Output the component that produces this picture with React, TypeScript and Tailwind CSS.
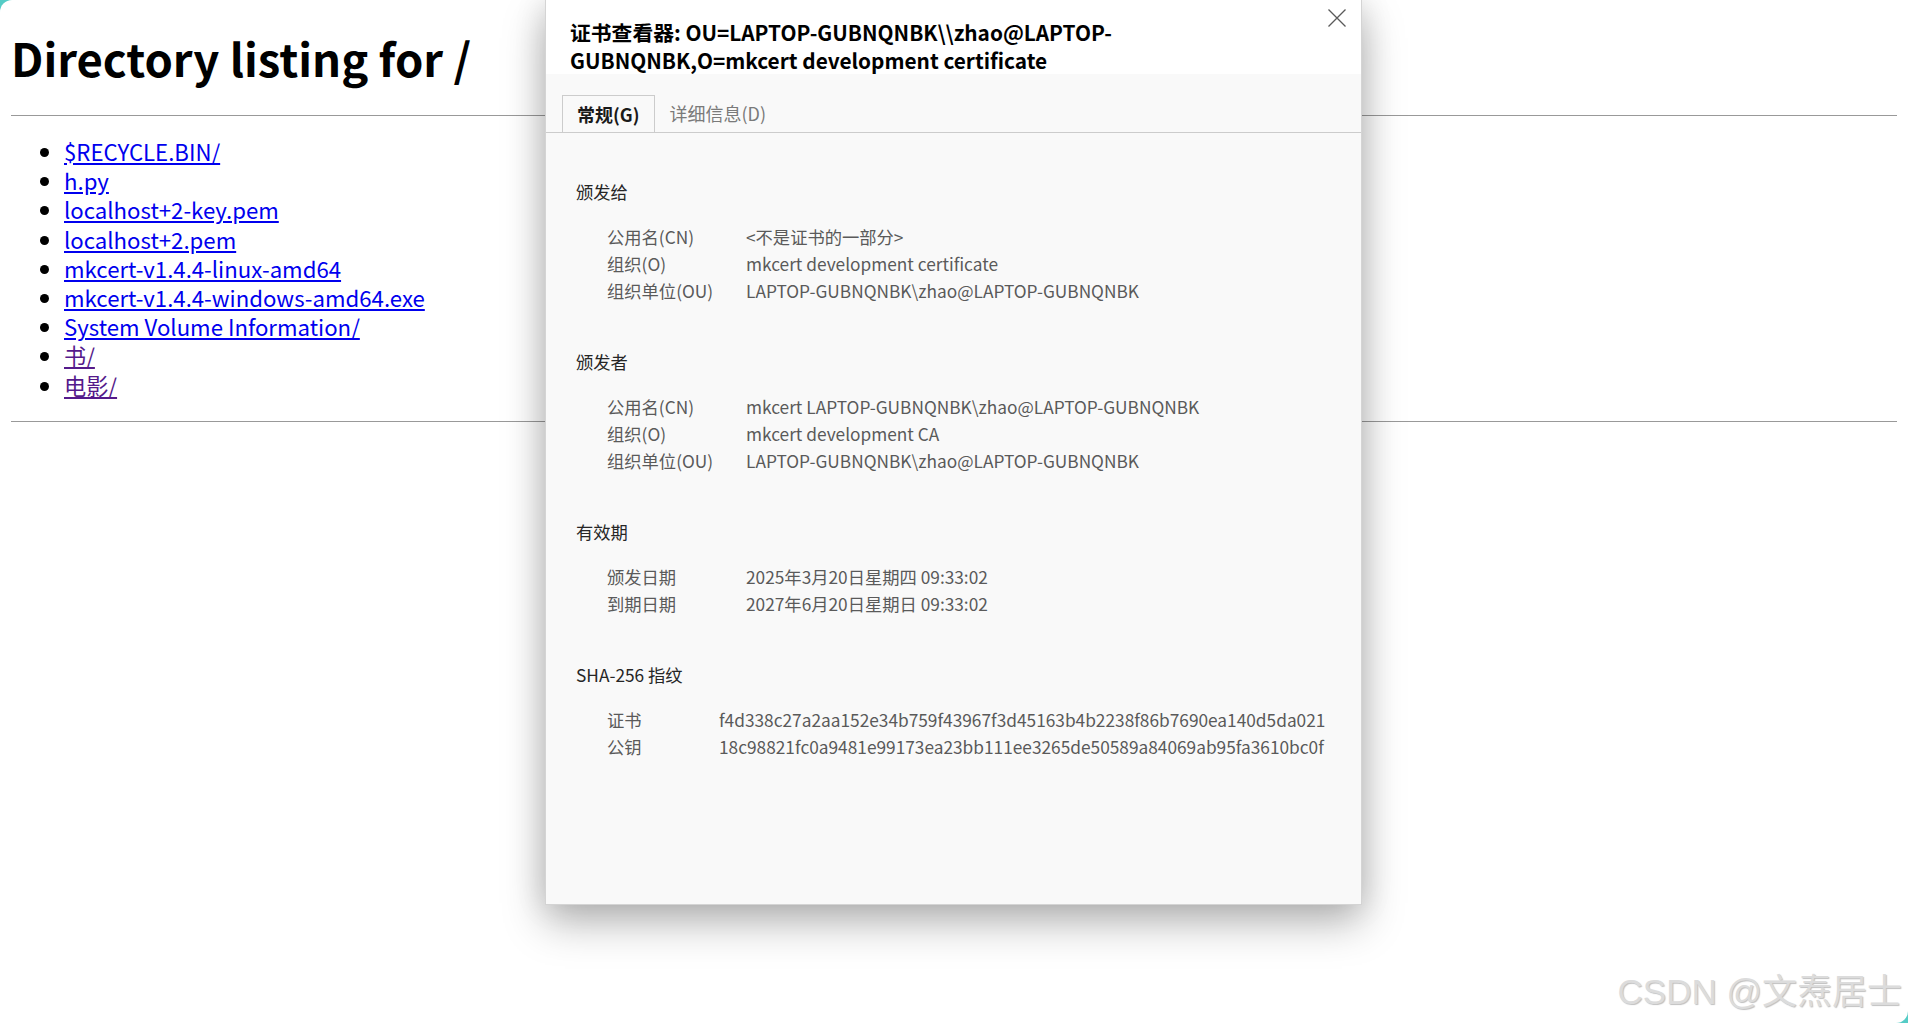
type Entry = { name: string; visited?: boolean };

const files: Entry[] = [
  { name: '$RECYCLE.BIN/' },
  { name: 'h.py' },
  { name: 'localhost+2-key.pem' },
  { name: 'localhost+2.pem' },
  { name: 'mkcert-v1.4.4-linux-amd64' },
  { name: 'mkcert-v1.4.4-windows-amd64.exe' },
  { name: 'System Volume Information/' },
  { name: '书/', visited: true },
  { name: '电影/', visited: true },
];

type Section = { title: string; labelWidth: string; rows: [string, string][] };

const sections: Section[] = [
  {
    title: '颁发给',
    labelWidth: 'w-[139px]',
    rows: [
      ['公用名(CN)', '<不是证书的一部分>'],
      ['组织(O)', 'mkcert development certificate'],
      ['组织单位(OU)', 'LAPTOP-GUBNQNBK\\zhao@LAPTOP-GUBNQNBK'],
    ],
  },
  {
    title: '颁发者',
    labelWidth: 'w-[139px]',
    rows: [
      ['公用名(CN)', 'mkcert LAPTOP-GUBNQNBK\\zhao@LAPTOP-GUBNQNBK'],
      ['组织(O)', 'mkcert development CA'],
      ['组织单位(OU)', 'LAPTOP-GUBNQNBK\\zhao@LAPTOP-GUBNQNBK'],
    ],
  },
  {
    title: '有效期',
    labelWidth: 'w-[139px]',
    rows: [
      ['颁发日期', '2025年3月20日星期四 09:33:02'],
      ['到期日期', '2027年6月20日星期日 09:33:02'],
    ],
  },
  {
    title: 'SHA-256 指纹',
    labelWidth: 'w-[112px]',
    rows: [
      ['证书', 'f4d338c27a2aa152e34b759f43967f3d45163b4b2238f86b7690ea140d5da021'],
      ['公钥', '18c98821fc0a9481e99173ea23bb111ee3265de50589a84069ab95fa3610bc0f'],
    ],
  },
];

function CertificateViewer() {
  return (
    <div className="absolute left-[545px] top-0 w-[817px] h-[905px] bg-[#f9f9f9] border-x border-b border-[#d4d4d4] shadow-[0_18px_40px_rgba(0,0,0,0.28),0_0_30px_rgba(0,0,0,0.12)]">
      <div className="relative h-[74px] bg-white pl-[24px] pt-[18px]">
        <h2 className="text-[20.8px] font-bold leading-[28px] text-black">
          证书查看器: OU=LAPTOP-GUBNQNBK\\zhao@LAPTOP-
          <br />
          GUBNQNBK,O=mkcert development certificate
        </h2>
        <button className="absolute right-[14px] top-[8px]">
          <svg width="20" height="20" viewBox="0 0 20 20" stroke="#5a5a5a" strokeWidth="1.3" fill="none">
            <path d="M1.5 1.5 L18.5 18.5 M18.5 1.5 L1.5 18.5" />
          </svg>
        </button>
      </div>

      <div className="mt-[21px] flex pl-[16px] border-b border-[#cccccc] text-[18px]">
        <div className="-mb-px h-[37px] px-[14px] flex items-center border border-b-0 border-[#cccccc] bg-[#f9f9f9] font-bold text-[#1a1a1a]">
          常规(G)
        </div>
        <div className="h-[37px] px-[15px] flex items-center text-[#7a7a7a]">详细信息(D)</div>
      </div>

      <div className="flex flex-col gap-[44px] pl-[30px] pt-[45px] text-[17.3px] leading-[27px]">
        {sections.map((section) => (
          <section key={section.title}>
            <h3 className="text-[#262626]">{section.title}</h3>
            <div className="mt-[18px] flex flex-col pl-[31px] text-[#5a5a5a]">
              {section.rows.map(([label, value]) => (
                <div key={label} className="flex whitespace-nowrap">
                  <span className={`${section.labelWidth} shrink-0`}>{label}</span>
                  <span>{value}</span>
                </div>
              ))}
            </div>
          </section>
        ))}
      </div>
    </div>
  );
}

export default function App() {
  return (
    <div className="relative w-[1908px] h-[1023px] overflow-hidden bg-[#55ccc6] font-['Noto_Sans_CJK_SC','Noto_Sans',sans-serif]">
      <div className="h-full bg-white rounded-tl-[12px] rounded-br-[12px] px-[11px] pt-[29px]">
        <h1 className="text-[45.4px] font-bold leading-[56px] text-black">Directory listing for /</h1>
        <hr className="mt-[30px] border-t border-[#999]" />
        <ul className="mt-[21px] list-disc pl-[53px] text-[22.2px] leading-[29.2px]">
          {files.map((file) => (
            <li key={file.name}>
              <a href="#" className={file.visited ? 'underline text-[#551a8b]' : 'underline text-[#0000ee]'}>
                {file.name}
              </a>
            </li>
          ))}
        </ul>
        <hr className="mt-[21px] border-t border-[#999]" />
      </div>

      <CertificateViewer />

      <div className="absolute right-[6px] bottom-[11px] text-[35px] leading-[40px] text-[#dcdcdc] font-['Liberation_Sans','Noto_Sans_CJK_SC',sans-serif] [text-shadow:1px_1px_1px_rgba(0,0,0,0.25)]">
        CSDN @文焘居士
      </div>
    </div>
  );
}
